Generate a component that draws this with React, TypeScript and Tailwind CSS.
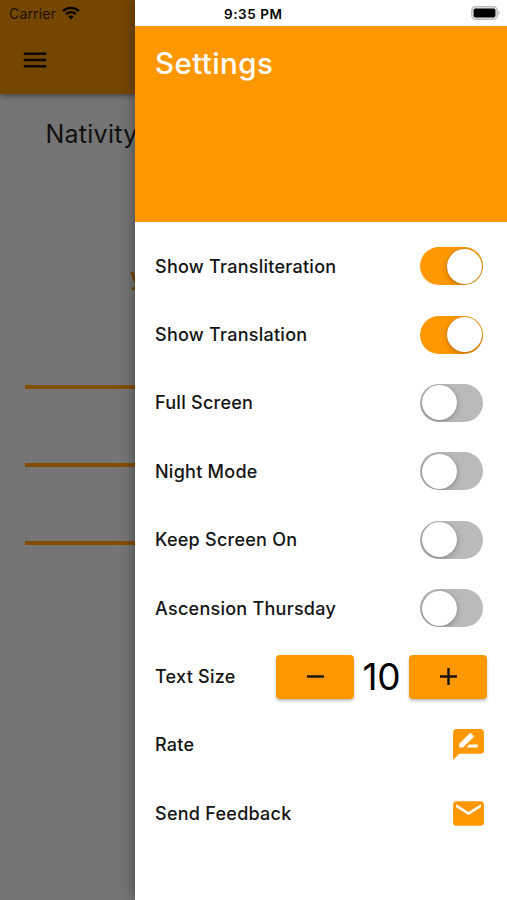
import type { ReactNode } from "react";
import { MdMenu, MdRateReview, MdEmail, MdAdd, MdRemove } from "react-icons/md";

function Row({ label, children }: { label: string; children: ReactNode }) {
  return (
    <div className="flex h-[68.4px] items-center justify-between pl-5">
      <span className="pt-px text-[18px] leading-6 font-medium tracking-[0.26px] whitespace-nowrap text-[#141414]">
        {label}
      </span>
      {children}
    </div>
  );
}

function Toggle({ on }: { on?: boolean }) {
  return (
    <button
      className={
        "mr-6 flex h-[38px] w-[63px] items-center overflow-hidden rounded-full p-[1.5px] " +
        (on ? "justify-end bg-[#ff9800]" : "justify-start bg-[#bababa]")
      }
    >
      <span className="size-[35px] rounded-full bg-white shadow-[0_2px_6px_rgba(0,0,0,0.25),0_0_1px_rgba(0,0,0,0.3)]" />
    </button>
  );
}

function StepButton({ children }: { children: ReactNode }) {
  return (
    <button className="flex h-[44px] w-[78px] items-center justify-center rounded-[4px] bg-[#ff9800] text-[29px] text-[#141414] shadow-[0_2px_3px_rgba(0,0,0,0.25)]">
      {children}
    </button>
  );
}

function WifiGlyph() {
  return (
    <svg width="18" height="14" viewBox="0 0 18 14" className="-mt-px" fill="none" stroke="#080500" strokeWidth="2.3">
      <path d="M1 5.2C5.5.8 12.500.8 17 5.200" />
      <path d="M3.900 8.200c2.900-2.800 7.300-2.800 10.200 0" />
      <path d="M6.200 10.600c1.600-1.500 4-1.500 5.600 0L9 13.500z" fill="#080500" stroke="none" />
    </svg>
  );
}

function Battery() {
  return (
    <svg width="29" height="15" viewBox="0 0 29 15" className="mt-[2px]">
      <rect x="0.700" y="0.700" width="25.600" height="12.600" rx="4" fill="#e4e4e4" stroke="#b9b9b9" strokeWidth="1.300" />
      <rect x="2.600" y="2.400" width="21.800" height="9.200" rx="1.800" fill="#000" />
      <path d="M27.400 4.800c1.600.5 1.600 3.900 0 4.400z" fill="#b4b4b4" />
    </svg>
  );
}

export default function App() {
  return (
    <div className="flex h-[900px] w-[507px] overflow-hidden bg-[#757575] font-['Inter','Liberation_Sans',sans-serif]">
      <main className="w-[135px] shrink-0 overflow-hidden">
        <header className="h-[94px] bg-[#754600] shadow-[0_2px_5px_rgba(0,0,0,0.4)]">
          <div className="flex h-[26px] items-center gap-[6px] pl-[9px] text-[14px] text-[#1c1100]">
            <span className="tracking-[0.15px]">Carrier</span>
            <WifiGlyph />
          </div>
          <MdMenu className="mt-[19px] ml-[20px] size-[30px] text-[#0d0800]" />
        </header>
        <h1 className="mt-[22px] ml-[45.5px] text-[25px] leading-9 tracking-[0.25px] whitespace-nowrap text-[#101010]">
          Nativity
        </h1>
        <p className="mt-[109px] ml-[130px] text-[24px] leading-8 font-semibold text-[#754600]">y</p>
        <div className="mt-[91.500px] ml-[25px] flex flex-col gap-[74.200px]">
          <hr className="h-[4px] border-0 bg-[#824e00]" />
          <hr className="h-[4px] border-0 bg-[#824e00]" />
          <hr className="h-[4px] border-0 bg-[#824e00]" />
        </div>
      </main>

      <aside className="z-10 flex w-[372px] shrink-0 flex-col bg-white shadow-[0_0_14px_rgba(0,0,0,0.4)]">
        <div className="flex h-[25.500px] shrink-0 items-center justify-between pr-[7px] pl-[89px]">
          <span className="pt-[2px] text-[13.500px] leading-5 font-semibold tracking-[0.55px] text-black">9:35 PM</span>
          <Battery />
        </div>
        <div className="h-[196.500px] shrink-0 bg-[#ff9800] pt-[18px] pl-5">
          <h2 className="text-[29.500px] leading-[38px] font-medium tracking-[0.4px] text-white">Settings</h2>
        </div>
        <div className="pt-[10px]">
          <Row label="Show Transliteration"><Toggle on /></Row>
          <Row label="Show Translation"><Toggle on /></Row>
          <Row label="Full Screen"><Toggle /></Row>
          <Row label="Night Mode"><Toggle /></Row>
          <Row label="Keep Screen On"><Toggle /></Row>
          <Row label="Ascension Thursday"><Toggle /></Row>
          <Row label="Text Size">
            <div className="mr-[20px] flex items-center">
              <StepButton><MdRemove /></StepButton>
              <span className="w-[55px] text-center text-[37px] leading-[44px] tracking-[-0.3px] text-black">10</span>
              <StepButton><MdAdd /></StepButton>
            </div>
          </Row>
          <Row label="Rate"><MdRateReview className="mr-[20px] size-[37px] text-[#ff9800]" /></Row>
          <Row label="Send Feedback"><MdEmail className="mr-[20px] size-[37px] text-[#ff9800]" /></Row>
        </div>
      </aside>
    </div>
  );
}
